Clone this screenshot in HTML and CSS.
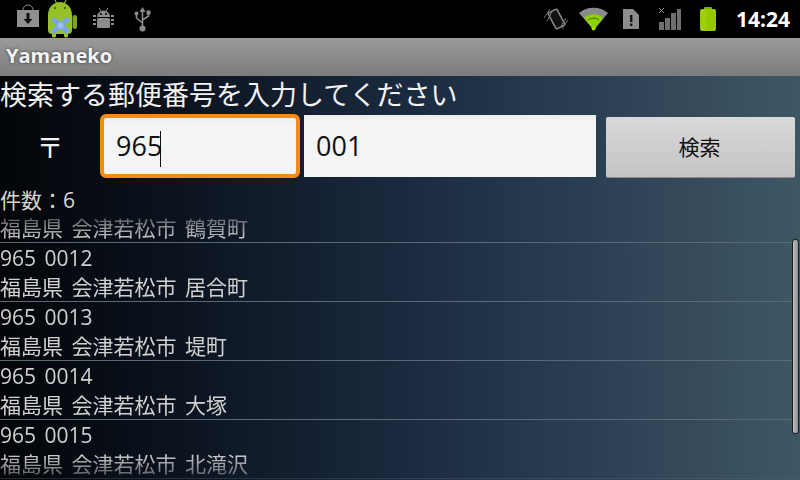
FILE: index.html
```html
<!DOCTYPE html>
<html lang="ja">
<head>
  <title>Yamaneko</title>
  <link rel="stylesheet" href="styles.css">
</head>
<body>

<div class="screen">
  <div class="status-bar">
    <div class="status-left">
      <svg class="ic-download" width="22" height="24" viewBox="0 0 22 24">
        <path d="M6 9V6a5 5 0 0 1 10 0v3" fill="none" stroke="#8c8c8c" stroke-width="1"/>
        <rect x="0" y="6" width="22" height="17" fill="#8f8f8f"/>
        <path d="M9.500 9h3v6h3l-4.500 5-4.500-5h3z" fill="#111"/>
      </svg>
      <svg class="ic-mascot" width="30" height="38" viewBox="0 0 30 38">
        <path d="M8 0l2 4M19 0l-2 4" stroke="#86b422" stroke-width="1.200"/>
        <path d="M1 15C1 7 7 2 13 2s12 5 12 13v15c0 3-2 4-4 4v2c0 2-4 2-4 0v-2H9v2c0 2-4 2-4 0v-2c-2 0-4-1-4-4z" fill="#94c228"/>
        <rect x="25.500" y="15" width="4.500" height="14" rx="2.200" fill="#7ea41f"/>
        <circle cx="8" cy="8" r="1.200" fill="#4c6e14"/>
        <circle cx="18" cy="8" r="1.200" fill="#4c6e14"/>
        <path d="M7 20l13 11M20 20L7 31" stroke="#7aa6e6" stroke-width="5" stroke-linecap="round"/>
        <circle cx="13.500" cy="25.500" r="3" fill="#9cc0f0"/>
      </svg>
      <svg class="ic-debug" width="21" height="22" viewBox="0 0 21 22">
        <path d="M6 1l2 3M15 1l-2 3" stroke="#8c8c8c" stroke-width="1"/>
        <path d="M4 10a6.500 6.500 0 0 1 13 0z" fill="#8c8c8c"/>
        <circle cx="8" cy="7" r="1" fill="#000"/>
        <circle cx="13" cy="7" r="1" fill="#000"/>
        <rect x="4" y="11" width="13" height="10" rx="1.500" fill="#8c8c8c"/>
        <path d="M0 9h3M0 13h3M0 17h3M18 9h3M18 13h3M18 17h3" stroke="#8c8c8c" stroke-width="2"/>
      </svg>
      <svg class="ic-usb" width="17" height="26" viewBox="0 0 17 26">
        <path d="M8.500 1L5.500 6h6z" fill="#8c8c8c"/>
        <path d="M8.500 5v16M8.500 17L2.500 12V8M8.500 14l6-4V7" fill="none" stroke="#8c8c8c" stroke-width="1.600"/>
        <circle cx="2.500" cy="7.500" r="2" fill="#8c8c8c"/>
        <rect x="12.500" y="4.500" width="4" height="4" fill="#8c8c8c"/>
        <circle cx="8.500" cy="22.500" r="3" fill="#8c8c8c"/>
      </svg>
    </div>
    <div class="status-right">
      <svg class="ic-rotate" width="26" height="24" viewBox="0 0 26 24">
        <rect x="-5" y="-9" width="10" height="18" rx="1.500" transform="translate(13.500 12) rotate(-28)" fill="#111" stroke="#8c8c8c" stroke-width="1.500"/>
        <path d="M1 11L7 2M4 14L10 3M23 11l-5 8M25 13l-6 9" stroke="#777" stroke-width="1"/>
      </svg>
      <svg class="ic-wifi" width="30" height="24" viewBox="0 0 30 24">
        <path d="M0 6C8-1 21-1 29 6l-14 17z" fill="#8a8a8a"/>
        <path d="M5 11c6-5 14-5 19 0l-9.500 12z" fill="#8fd000"/>
        <path d="M9 13c4-2.500 7-2.500 11 0" stroke="#4a6a08" stroke-width="1" fill="none"/>
        <circle cx="14.500" cy="21.500" r="2" fill="#a0e000"/>
      </svg>
      <svg class="ic-sim" width="16" height="20" viewBox="0 0 16 20">
        <path d="M0 0h10l6 6v14H0z" fill="#8c8c8c"/>
        <rect x="7" y="6" width="2.400" height="7" fill="#111"/>
        <rect x="7" y="14.500" width="2.400" height="2.400" fill="#111"/>
      </svg>
      <svg class="ic-signal" width="24" height="24" viewBox="0 0 24 24">
        <path d="M1 1l5 5M6 1L1 6" stroke="#8c8c8c" stroke-width="1"/>
        <rect x="1" y="15" width="5" height="8" fill="#6f6f6f"/>
        <rect x="7" y="11" width="5" height="12" fill="#6f6f6f"/>
        <rect x="13" y="6" width="5" height="17" fill="#6f6f6f"/>
        <rect x="19" y="2" width="4" height="21" fill="#6f6f6f"/>
      </svg>
      <svg class="ic-battery" width="18" height="25" viewBox="0 0 18 25">
        <rect x="5" y="0" width="8" height="3" rx="1" fill="#7fb000"/>
        <rect x="1" y="2" width="16" height="22" rx="2" fill="#96c800"/>
        <rect x="2" y="3" width="5" height="20" fill="#a8d810" opacity="0.500"/>
      </svg>
      <span class="clock">14:24</span>
    </div>
  </div>

  <div class="title-bar">Yamaneko</div>

  <div class="content">
    <div class="prompt">検索する郵便番号を入力してください</div>

    <div class="search-row">
      <div class="zip-mark">〒</div>
      <div class="field field-focus">965<span class="caret"></span></div>
      <div class="field field-plain">001</div>
      <div class="search-btn">検索</div>
    </div>

    <div class="count">件数：6</div>

    <div class="list-wrap">
      <div class="list-clip">
        <ul class="result-list">
          <li class="result">
            <div>965 0011</div>
            <div>福島県 会津若松市 鶴賀町</div>
          </li>
          <li class="result">
            <div>965 0012</div>
            <div>福島県 会津若松市 居合町</div>
          </li>
          <li class="result">
            <div>965 0013</div>
            <div>福島県 会津若松市 堤町</div>
          </li>
          <li class="result">
            <div>965 0014</div>
            <div>福島県 会津若松市 大塚</div>
          </li>
          <li class="result">
            <div>965 0015</div>
            <div>福島県 会津若松市 北滝沢</div>
          </li>
        </ul>
      </div>
      <div class="scrollbar"></div>
    </div>
  </div>
</div>

</body>
</html>
```

FILE: styles.css
```css
* {
  box-sizing: border-box;
}

html, body {
  margin: 0;
  padding: 0;
  background: #000;
}

body {
  font-family: "Open Sans", "Noto Sans CJK JP", sans-serif;
}

.screen {
  width: 800px;
  height: 480px;
  display: flex;
  flex-direction: column;
  overflow: hidden;
}

.status-bar {
  height: 38px;
  flex: none;
  background: #000;
  display: flex;
  justify-content: space-between;
  align-items: center;
}

.status-left,
.status-right {
  display: flex;
  align-items: center;
}

.status-left {
  padding-left: 17px;
}

.ic-download {
  margin-top: -6px;
}

.ic-mascot {
  margin-left: 8px;
}

.ic-debug {
  margin-left: 16px;
  margin-top: -2px;
}

.ic-usb {
  margin-left: 20px;
}

.status-right {
  padding-right: 10px;
}

.ic-rotate {
  margin-top: -1px;
}

.ic-wifi {
  margin-left: 10px;
  margin-top: -1px;
}

.ic-sim {
  margin-left: 14px;
}

.ic-signal {
  margin-left: 19px;
  margin-top: -1px;
}

.ic-battery {
  margin-left: 17px;
}

.clock {
  margin-left: 19px;
  color: #fff;
  font-size: 21px;
  font-weight: 700;
  line-height: 38px;
}

.title-bar {
  height: 38px;
  flex: none;
  padding-left: 6px;
  background: linear-gradient(#9a9a9a, #7c7c7c);
  color: #f4f4f4;
  font-size: 20px;
  font-weight: 700;
  line-height: 36px;
  text-shadow: 0 0 3px #333;
}

.content {
  flex: 1;
  display: flex;
  flex-direction: column;
  min-height: 0;
  background: linear-gradient(90deg, #030508 0%, #0d1522 25%, #1a2a3e 50%, #2c4054 75%, #3f5763 100%);
}

.prompt {
  height: 38px;
  color: #f2f2f2;
  font-size: 27px;
  line-height: 38px;
  white-space: nowrap;
}

.search-row {
  display: flex;
  align-items: center;
  height: 64px;
}

.zip-mark {
  width: 100px;
  color: #f2f2f2;
  font-size: 27px;
  text-align: center;
}

.field {
  color: #111;
  font-size: 27px;
  background: linear-gradient(#ececec, #f5f5f5 12%, #f3f4f5);
}

.field-focus {
  width: 200px;
  height: 64px;
  padding-left: 12px;
  border: 4px solid #f68b12;
  border-radius: 6px;
  line-height: 56px;
}

.field-plain {
  width: 292px;
  height: 62px;
  margin-left: 4px;
  padding-left: 12px;
  line-height: 62px;
}

.caret {
  display: inline-block;
  width: 1px;
  height: 36px;
  margin-left: -2px;
  background: #111;
  vertical-align: middle;
}

.search-btn {
  width: 189px;
  height: 61px;
  margin-left: 10px;
  margin-top: 3px;
  padding-right: 2px;
  border-bottom: 1px solid #8d8d8d;
  border-radius: 2px;
  background: linear-gradient(#d9d9d9, #c4c4c4);
  color: #111;
  font-size: 21px;
  line-height: 60px;
  text-align: center;
}

.count {
  height: 36px;
  padding-top: 8px;
  color: #d6d6d6;
  font-size: 21px;
  line-height: 28px;
}

.list-wrap {
  position: relative;
  flex: 1;
  min-height: 0;
}

.list-clip {
  height: 100%;
  overflow: hidden;
  -webkit-mask-image: linear-gradient(rgba(0, 0, 0, 0.3), #000 26px, #000 calc(100% - 26px), rgba(0, 0, 0, 0.3));
  mask-image: linear-gradient(rgba(0, 0, 0, 0.3), #000 26px, #000 calc(100% - 26px), rgba(0, 0, 0, 0.3));
}

.result-list {
  list-style: none;
  margin: -30px 0 0;
  padding: 0;
}

.result {
  height: 59px;
  padding-top: 1px;
  border-bottom: 1px solid #5a6a75;
  color: #d0d0d0;
  font-size: 21px;
  line-height: 29px;
  word-spacing: 3px;
}

.scrollbar {
  position: absolute;
  top: 25px;
  left: 792px;
  width: 7px;
  height: 195px;
  border: 1px solid #16202a;
  border-radius: 3px;
  background: linear-gradient(90deg, #c0c0c0, #8f8f8f);
}
```
